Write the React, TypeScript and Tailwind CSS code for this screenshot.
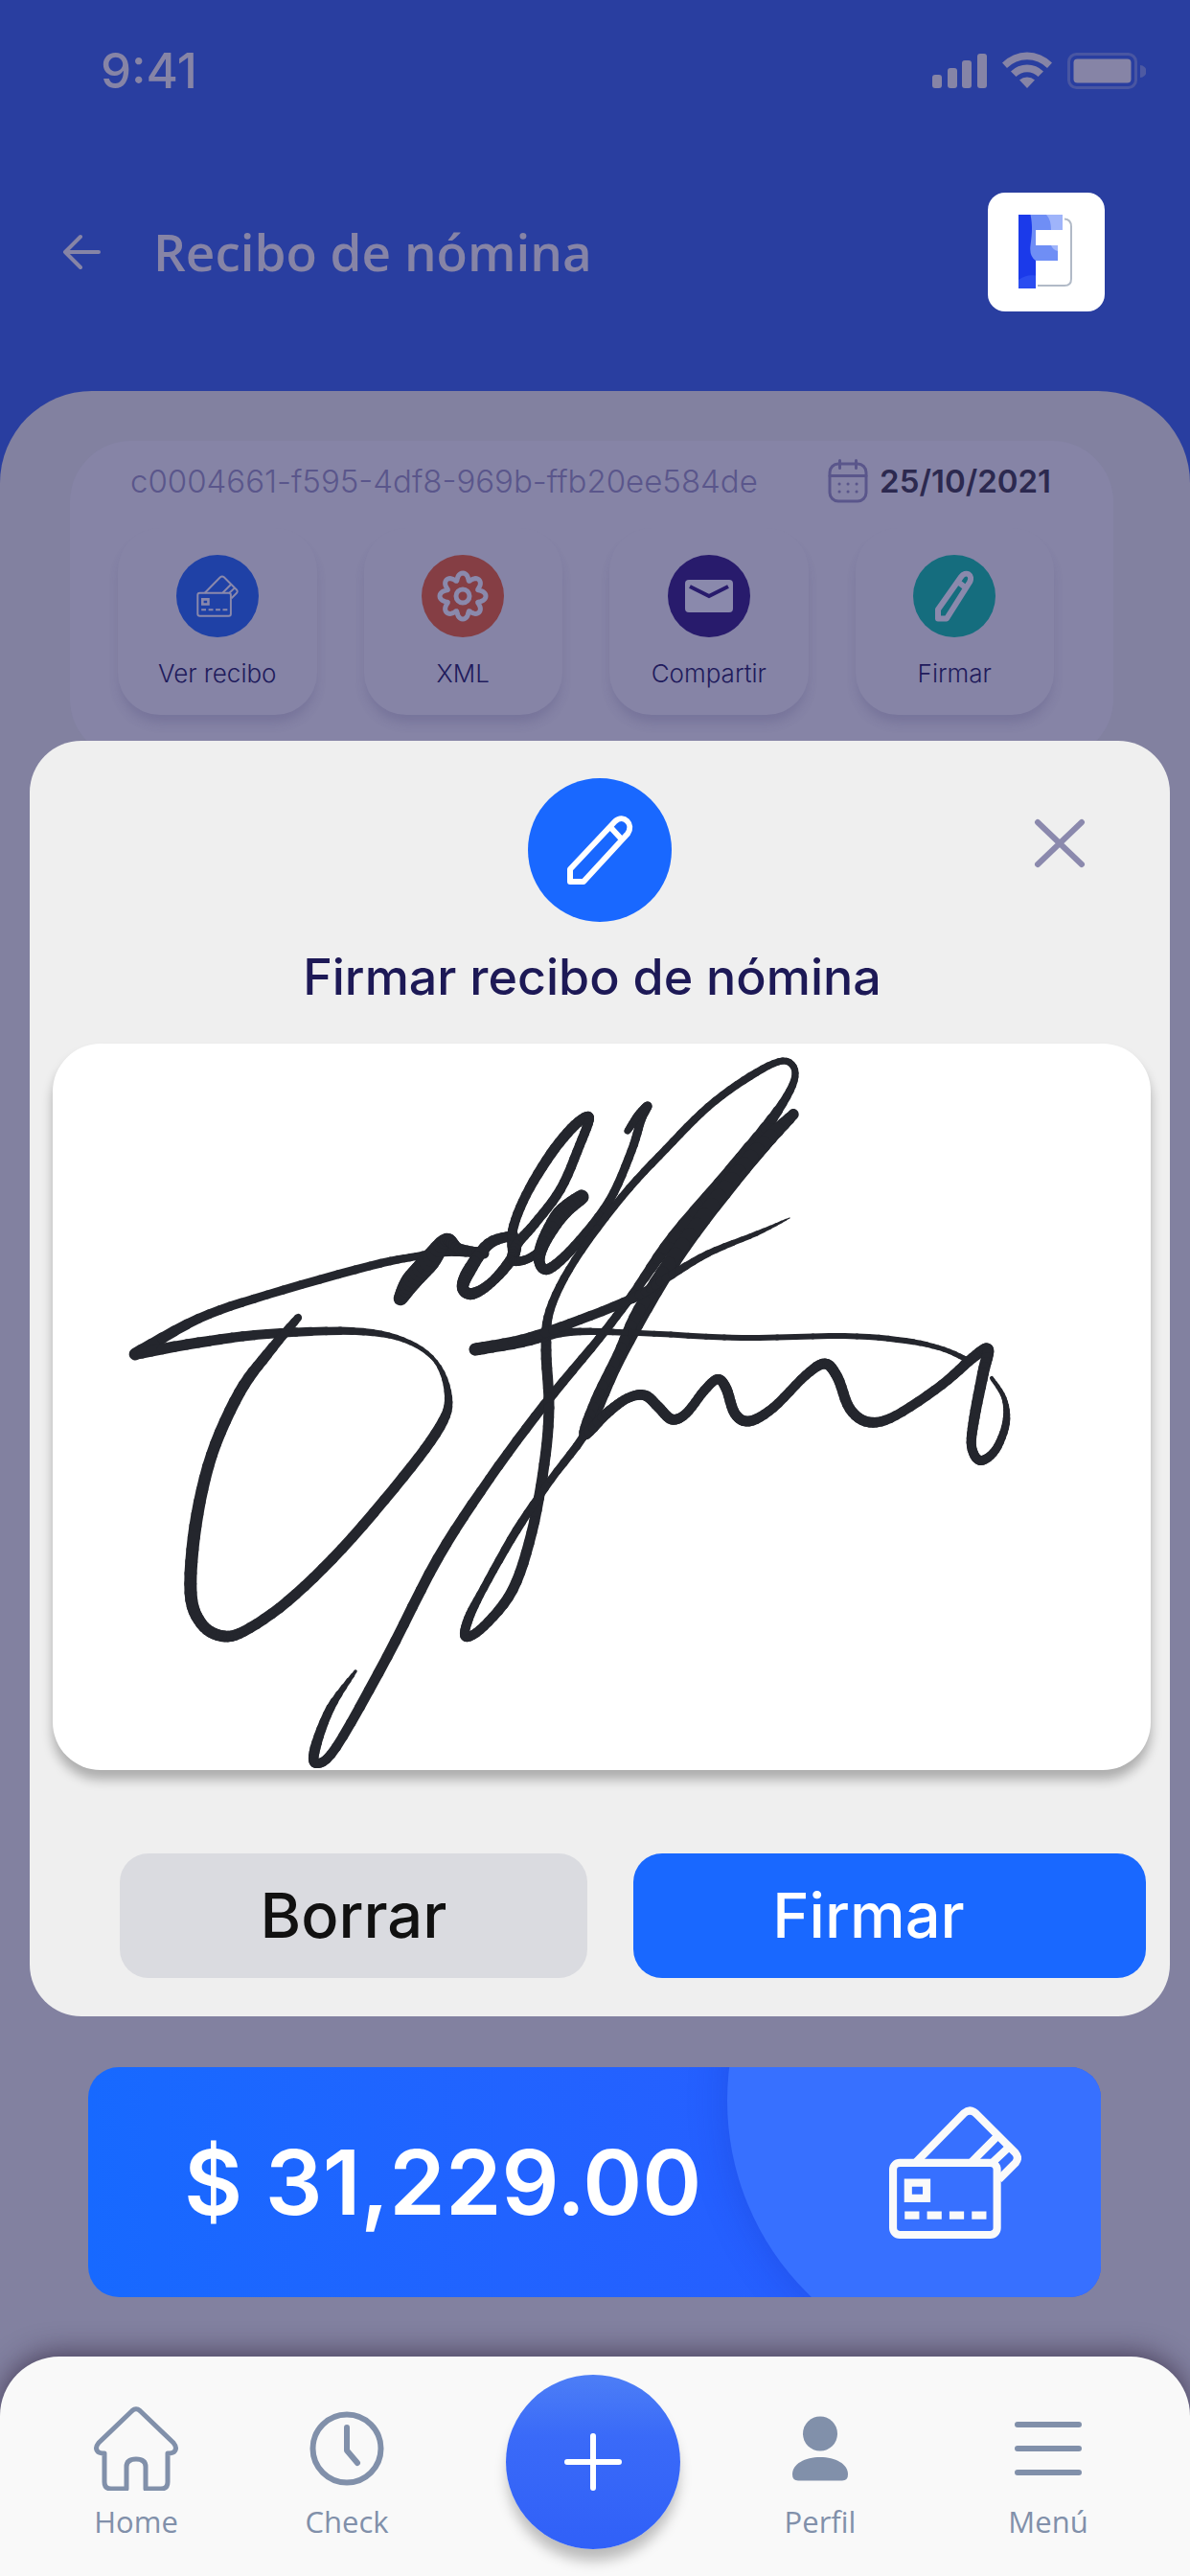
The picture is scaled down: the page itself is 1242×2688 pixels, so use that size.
import { useState } from 'react';
import type { ReactNode } from 'react';

/** One pen sample: x, y and nib width. */
type PenPoint = [number, number, number];

const SIGNATURE: PenPoint[][] = [
  // long bar running into the first name
  [
    [86, 324, 13], [152, 287, 10], [224, 262, 9], [331, 232, 9], [380, 222, 8], [413, 217, 10],
    [445, 218, 11],
  ],
  // big left loop
  [
    [86, 324, 12], [152, 312, 11], [224, 303, 10], [313, 300, 8], [366, 309, 5], [400, 332, 4],
    [413, 369, 8], [404, 400, 11], [366, 452, 11], [302, 527, 11], [245, 582, 11], [200, 613, 11],
    [176, 618, 12], [155, 605, 12], [144, 573, 13], [149, 503, 13], [166, 429, 12],
    [195, 364, 12], [224, 324, 11], [256, 286, 8],
  ],
  // r
  [[363, 266, 14], [374, 248, 21], [393, 227, 22], [411, 205, 14], [424, 214, 11], [450, 219, 11]],
  // o
  [
    [481, 200, 10], [455, 209, 12], [434, 238, 14], [428, 255, 12], [438, 261, 12], [458, 249, 10],
    [480, 223, 12], [484, 205, 11],
  ],
  // d
  [
    [481, 222, 11], [480, 195, 10], [494, 158, 10], [520, 115, 11], [545, 85, 11], [560, 77, 10],
    [550, 106, 10], [530, 152, 10], [503, 188, 10], [484, 210, 11], [480, 226, 10], [495, 225, 9],
    [512, 214, 9],
  ],
  // e and l
  [
    [552, 160, 15], [530, 178, 18], [512, 208, 14], [508, 228, 11], [518, 235, 11], [545, 211, 10],
    [581, 164, 9], [604, 112, 9], [614, 80, 9], [621, 65, 9], [611, 75, 9], [600, 91, 7],
  ],
  // upward sweep, top loop and the long stem
  [
    [316, 655, 3], [290, 693, 9], [274, 735, 11], [275, 751, 10], [296, 734, 10], [349, 640, 11],
    [402, 537, 11], [456, 454, 10], [513, 377, 10], [570, 308, 9], [605, 262, 9], [648, 202, 13],
    [719, 120, 15], [762, 62, 9], [775, 31, 7], [762, 18, 7], [728, 34, 8], [684, 66, 8],
    [640, 110, 8], [594, 160, 8], [545, 226, 8], [519, 278, 9], [515, 320, 11], [518, 380, 11],
    [513, 439, 11], [500, 510, 11], [480, 570, 11], [450, 608, 10], [431, 619, 10], [434, 600, 10],
    [450, 568, 8], [484, 508, 9], [520, 455, 8], [560, 400, 9], [594, 325, 11], [650, 227, 12],
    [712, 144, 12], [773, 73, 10],
  ],
  // doubled back-stroke falling into the wave
  [
    [773, 74, 11], [735, 112, 17], [695, 160, 17], [650, 220, 15], [612, 278, 13], [590, 325, 11],
    [567, 372, 11], [555, 408, 11], [578, 386, 11], [600, 370, 10], [618, 367, 11], [632, 379, 11],
    [646, 392, 11], [661, 386, 10], [680, 362, 10], [694, 350, 10], [703, 360, 11], [712, 386, 11],
    [727, 394, 11], [752, 380, 10], [786, 346, 10], [806, 334, 11], [819, 348, 11], [832, 381, 11],
    [852, 395, 11], [880, 388, 10], [928, 356, 10], [960, 328, 11], [976, 319, 12], [971, 344, 12],
    [962, 390, 11], [959, 420, 10], [968, 435, 10], [984, 424, 9], [995, 396, 8], [993, 370, 5],
    [980, 349, 4],
  ],
  // crossbar
  [
    [958, 332, 6], [930, 319, 5], [890, 310, 6], [826, 305, 6], [719, 307, 6], [612, 302, 6],
    [540, 301, 8], [490, 312, 10], [441, 319, 13], [490, 309, 11], [540, 292, 10], [605, 266, 10],
    [640, 245, 9], [684, 219, 7], [735, 198, 5], [769, 182, 1],
  ],
];

const GEAR_PATH = buildGear();

export default function App() {
  const [signed, setSigned] = useState(true);

  return (
    <div className="flex min-h-screen flex-col bg-[#293ea0] font-[family-name:Inter,sans-serif]">
      <StatusBar />

      <header className="flex items-center justify-between pt-[97px] pr-[89px] pl-[64px]">
        <div className="flex items-center gap-[54px] text-[#8684a6]">
          <button type="button" aria-label="Volver">
            <svg viewBox="0 0 42 38" className="h-[38px] w-[42px]" fill="none" stroke="currentColor" strokeWidth="4" strokeLinecap="round" strokeLinejoin="round">
              <path d="M39 19H4M20 3 4 19l16 16" />
            </svg>
          </button>
          <h1 className="font-[family-name:'Open_Sans',sans-serif] text-[53px] leading-[64px] font-semibold">
            Recibo de nómina
          </h1>
        </div>
        <Logo />
      </header>

      <main className="mt-[83px] flex flex-1 flex-col rounded-t-[96px] bg-[#8281a0] pt-[52px]">
        <ReceiptPanel />
        <SignDialog signed={signed} onClear={() => setSigned(false)} />

        <section className="relative mt-[53px] mr-[93px] ml-[92px] flex h-[240px] items-center justify-between overflow-hidden rounded-[32px] bg-linear-to-r from-[#1769ff] to-[#2b5aff] pr-[83px] pl-[100px]">
          <span className="absolute -top-[248px] -right-[176px] size-[566px] rounded-full bg-[#3770ff] shadow-[0_0_40px_rgba(20,40,160,0.25)]" />
          <p className="relative text-[94px] leading-[120px] font-semibold text-white">$ 31,229.00</p>
          <CardsIcon className="relative -mt-5 h-[138px] w-[138px] text-[#fafafa]" strokeWidth={8} />
        </section>

        <BottomNav />
      </main>
    </div>
  );
}

function StatusBar() {
  return (
    <div className="flex items-center justify-between pt-[44px] pr-[46px] pl-[105px] text-[#8684a6]">
      <span className="text-[51px] leading-[60px] font-medium">9:41</span>
      <svg viewBox="0 0 223 40" className="h-10 w-[223px]" fill="currentColor">
        <rect x="0" y="24" width="10" height="14" rx="3" />
        <rect x="16" y="17" width="10" height="21" rx="3" />
        <rect x="31" y="9" width="10" height="29" rx="3" />
        <rect x="47" y="2" width="10" height="36" rx="3" />
        <path d="M73 11.5a36.5 36.5 0 0 1 52 0l-5 5.5a29.5 29.5 0 0 0-42 0z" />
        <path d="M82 20.500a24 24 0 0 1 34 0l-5.500 5.500a16.500 16.500 0 0 0-23 0z" />
        <path d="M91 29.500a12 12 0 0 1 16 0l-8 8.500z" />
        <rect x="142.500" y="2.500" width="70" height="35" rx="8" fill="none" stroke="currentColor" strokeWidth="3" opacity="0.35" />
        <rect x="147.500" y="7.500" width="60" height="25" rx="4" />
        <path d="M217 14a6.500 6.500 0 0 1 0 13z" opacity="0.4" />
      </svg>
    </div>
  );
}

function Logo() {
  return (
    <div className="flex h-[124px] w-[122px] items-center justify-center rounded-[18px] bg-white">
      <svg viewBox="0 0 58 78" className="h-[78px] w-[58px]">
        <path d="M48 4.500q7 .5 7 8V67q0 7-7 7H20" fill="none" stroke="#b1bac7" strokeWidth="2" />
        <path d="M0 0h18v77H0z" fill="#1b3aea" />
        <path d="M0 77V68q8-6 18-4.500V77z" fill="#2b4df0" />
        <path d="M12.500 0H46v16H18v16h23v16H18q-7-5-5.500-16C14 20 15 12 12.500 0z" fill="#6f8ef5" />
        <path d="M29 0h17v16H34q0-11-5-16z" fill="#9fb4fa" />
        <path d="M34 32h7v6q-5-1-7-6z" fill="#9fb4fa" />
      </svg>
    </div>
  );
}

function ReceiptPanel() {
  return (
    <section className="mr-[80px] ml-[73px] rounded-[64px] bg-[#8684a6] pt-5 pb-[47px]">
      <div className="flex h-11 items-center justify-between pr-[65px] pl-[63px]">
        <span className="text-[33px] leading-10 font-light text-[#5a568b]">
          c0004661-f595-4df8-969b-ffb20ee584de
        </span>
        <div className="flex items-center gap-3">
          <CalendarIcon />
          <time dateTime="2021-10-25" className="text-[33px] leading-10 font-semibold text-[#2c294f]">
            25/10/2021
          </time>
        </div>
      </div>

      <div className="mt-[27px] mr-[62px] ml-[50px] grid grid-cols-4 gap-[49px]">
        <ActionTile label="Ver recibo" color="bg-[#1f41a6]">
          <CardsIcon className="h-[44px] w-[44px]" strokeWidth={6} />
        </ActionTile>
        <ActionTile label="XML" color="bg-[#853e44]">
          <svg viewBox="-27 -27 54 54" className="size-[54px]" fill="none" stroke="currentColor" strokeWidth="5">
            <path d={GEAR_PATH} />
            <circle r="7" />
          </svg>
        </ActionTile>
        <ActionTile label="Compartir" color="bg-[#281b6c]">
          <svg viewBox="0 0 50 34" className="h-[34px] w-[50px]">
            <rect width="50" height="34" rx="4" fill="currentColor" />
            <path d="m5 7 20 10L45 7" fill="none" stroke="#281b6c" strokeWidth="4" />
          </svg>
        </ActionTile>
        <ActionTile label="Firmar" color="bg-[#156d7e]">
          <svg viewBox="0 0 40 54" className="h-[54px] w-[40px]" fill="none" stroke="currentColor" strokeWidth="6" strokeLinejoin="round">
            <path d="M3 50.500V41L27 7c5-7 13-2 9 5.500L12 50.500zM25 13l9 7" />
          </svg>
        </ActionTile>
      </div>
    </section>
  );
}

function ActionTile({ label, color, children }: { label: string; color: string; children: ReactNode }) {
  return (
    <button
      type="button"
      className="flex h-[195px] flex-col items-center rounded-[44px] bg-[#8684a6] pt-7 shadow-[0_10px_12px_-2px_rgba(60,55,110,0.2)]"
    >
      <span className={`flex size-[86px] items-center justify-center rounded-full text-[#8a89ac] ${color}`}>
        {children}
      </span>
      <span className="mt-[22px] text-[26px] leading-8 font-light text-[#1f1b5c]">{label}</span>
    </button>
  );
}

function SignDialog({ signed, onClear }: { signed: boolean; onClear: () => void }) {
  return (
    <section
      role="dialog"
      aria-labelledby="sign-title"
      className="relative -mt-5 mr-[21px] ml-[31px] rounded-[54px] bg-[#efefef] pt-[39px] pb-[40px]"
    >
      <button type="button" aria-label="Cerrar" className="absolute top-[81px] right-[88px] text-[#8b89ad]">
        <svg viewBox="0 0 54 52" className="h-[52px] w-[54px]" fill="none" stroke="currentColor" strokeWidth="6" strokeLinecap="round">
          <path d="m4 4 46 44M50 4 4 48" />
        </svg>
      </button>

      <div className="mx-auto flex size-[150px] items-center justify-center rounded-full bg-[#1968ff] text-white">
        <svg viewBox="0 0 70 74" className="h-[74px] w-[70px]" fill="none" stroke="currentColor" strokeWidth="6" strokeLinejoin="round">
          <path d="M4 70V57L51 7c9-8 20 3 13 13L18 70zM46 13l12 13" />
        </svg>
      </div>
      <h2 id="sign-title" className="mt-[26px] pr-4 text-center text-[52px] leading-[64px] font-medium text-[#1d1956]">
        Firmar recibo de nómina
      </h2>

      <div className="mt-[37px] mr-5 ml-6 overflow-hidden rounded-[50px] bg-white shadow-[0_10px_12px_rgba(0,0,0,0.28)]">
        <svg viewBox="0 0 1146 758" className="block w-full" fill="none" stroke="#24262d" strokeLinecap="round" role="img" aria-label="Firma">
          {signed && SIGNATURE.map((points, i) => <PenStroke key={i} points={points} />)}
        </svg>
      </div>

      <div className="mt-[87px] mr-[25px] ml-[94px] grid grid-cols-[488fr_535fr] gap-12 text-[65px] leading-[80px] font-medium">
        <button type="button" onClick={onClear} className="h-[130px] rounded-[30px] bg-[#dadbe0] text-[#111111]">
          Borrar
        </button>
        <button type="button" className="h-[130px] rounded-[30px] bg-[#1968ff] pr-11 text-white">
          Firmar
        </button>
      </div>
    </section>
  );
}

/** Smooths the samples with Catmull-Rom and eases the nib width between them. */
function PenStroke({ points }: { points: PenPoint[] }) {
  const steps = 6;
  const pieces: { d: string; w: number }[] = [];
  for (let i = 0; i < points.length - 1; i++) {
    const p0 = points[i - 1] ?? points[i];
    const p1 = points[i];
    const p2 = points[i + 1];
    const p3 = points[i + 2] ?? p2;
    const at = (t: number, k: number) =>
      0.5 *
      (2 * p1[k] +
        (p2[k] - p0[k]) * t +
        (2 * p0[k] - 5 * p1[k] + 4 * p2[k] - p3[k]) * t * t +
        (3 * p1[k] - p0[k] - 3 * p2[k] + p3[k]) * t * t * t);
    for (let s = 0; s < steps; s++) {
      const a = s / steps;
      const b = (s + 1) / steps;
      pieces.push({
        d: `M${at(a, 0).toFixed(1)} ${at(a, 1).toFixed(1)}L${at(b, 0).toFixed(1)} ${at(b, 1).toFixed(1)}`,
        w: p1[2] + (p2[2] - p1[2]) * ((a + b) / 2),
      });
    }
  }
  return (
    <g>
      {pieces.map((piece, i) => (
        <path key={i} d={piece.d} strokeWidth={piece.w} />
      ))}
    </g>
  );
}

function BottomNav() {
  return (
    <nav className="mt-[62px] grid h-[229px] flex-1 grid-cols-[220fr_220fr_294fr_180fr_296fr] items-start rounded-t-[62px] bg-[#f9f9f9] pt-[52px] pl-8 shadow-[0_-4px_28px_rgba(40,25,50,0.6)]">
      <NavItem label="Home">
        <svg viewBox="0 0 88 88" className="size-[88px]" fill="none" stroke="currentColor" strokeWidth="5" strokeLinejoin="round">
          <path d="M40 4.500q4-3.500 8 0L83 38q4 5 1.500 8.500-1.500 2.500-7.500 2.500v30q0 7-7 7H54V63q0-8-10-8t-10 8v23H18q-7 0-7-7V49q-6 0-7.500-2.500Q1 43 5 38z" />
        </svg>
      </NavItem>
      <NavItem label="Check">
        <svg viewBox="0 0 78 78" className="size-[78px]" fill="none" stroke="currentColor" strokeWidth="6" strokeLinecap="round" strokeLinejoin="round">
          <circle cx="39" cy="39" r="35.500" />
          <path d="M39 17v24l11 13" />
        </svg>
      </NavItem>
      <button
        type="button"
        aria-label="Agregar"
        className="-mt-[33px] flex size-[182px] items-center justify-center justify-self-center rounded-full bg-linear-to-b from-[#4d7ef6] via-[#3a6af8] via-35% to-[#3060f8] text-white shadow-[0_14px_14px_-2px_rgba(0,0,0,0.25)]"
      >
        <svg viewBox="0 0 60 60" className="size-[60px]" fill="none" stroke="currentColor" strokeWidth="6" strokeLinecap="round">
          <path d="M30 3v54M3 30h54" />
        </svg>
      </button>
      <NavItem label="Perfil">
        <svg viewBox="0 0 60 68" className="h-[68px] w-[60px]" fill="currentColor">
          <circle cx="30" cy="18.500" r="18" />
          <path d="M1 61C1 50 14 43 30 43s29 7 29 18q0 6.500-6 6.500H7q-6 0-6-6.500z" />
        </svg>
      </NavItem>
      <NavItem label="Menú">
        <svg viewBox="0 0 72 58" className="h-[58px] w-[72px]" fill="none" stroke="currentColor" strokeWidth="6" strokeLinecap="round">
          <path d="M4 4h64M4 29h64M4 54h64" />
        </svg>
      </NavItem>
    </nav>
  );
}

function NavItem({ label, children }: { label: string; children: ReactNode }) {
  return (
    <a href="#" className="flex flex-col items-center text-[#8190aa]">
      <span className="flex h-[88px] items-center">{children}</span>
      <span className="mt-3 font-[family-name:'Open_Sans',sans-serif] text-[31px] leading-10">{label}</span>
    </a>
  );
}

function CalendarIcon() {
  return (
    <svg viewBox="0 0 42 46" className="h-[46px] w-[42px] text-[#5a568b]" fill="none" stroke="currentColor" strokeWidth="3" strokeLinecap="round">
      <rect x="2" y="5" width="38" height="39" rx="9" />
      <path d="M2 17.500h38M12.500 1.500v8M29.500 1.500v8" />
      <path d="M12 26h.1M21 26h.1M30 26h.1M12 34h.1M21 34h.1M30 34h.1" strokeWidth="3" />
    </svg>
  );
}

function CardsIcon({ className, strokeWidth }: { className: string; strokeWidth: number }) {
  return (
    <svg viewBox="0 0 136 136" className={className} fill="none" stroke="currentColor" strokeWidth={strokeWidth} strokeLinejoin="round">
      <rect x="4" y="58" width="107" height="74" rx="7" />
      <path d="M27 58 77 7q6-5 12 0l41 41q4 5 0 10l-17 17" />
      <path d="m85 57 26-26M107 57l16-15" />
      <path d="M15.500 74.500h27v24h-27zM23.500 82.500v8h11v-8z" fill="currentColor" fillRule="evenodd" stroke="none" />
      <path d="M16 112h84" strokeDasharray="15 8" />
    </svg>
  );
}

/** Eight-lobed wavy gear outline centred on the origin. */
function buildGear(): string {
  const count = 160;
  const points: string[] = [];
  for (let i = 0; i < count; i++) {
    const t = (i / count) * Math.PI * 2;
    const r = 20.5 + 3.5 * Math.cos(8 * t);
    const a = t + 0.06 * Math.sin(8 * t) - Math.PI / 2;
    points.push(`${(r * Math.cos(a)).toFixed(2)} ${(r * Math.sin(a)).toFixed(2)}`);
  }
  return `M${points.join('L')}Z`;
}
